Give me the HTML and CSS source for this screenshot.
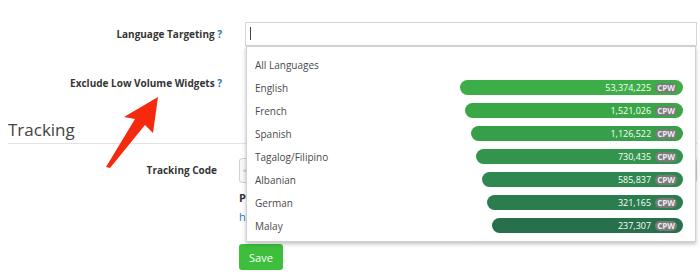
FILE: index.html
```html
<!DOCTYPE html>
<html lang="en">
<head>
    <meta charset="UTF-8">
    <meta name="viewport" content="width=device-width, initial-scale=1.0">
    <title>Widget Settings</title>
    <link rel="stylesheet" href="styles.css">
</head>
<body>
    <div class="page">
        <div class="form-row top-row">
            <label class="label">Language Targeting <span class="help">?</span></label>
            <div class="field">
                <div class="select-input"><span class="caret"></span></div>
                <ul class="dropdown">
                    <li class="option"><span>All Languages</span></li>
                    <li class="option"><span>English</span>
                        <span class="bar" style="width:223px;background:#3dae47">53,374,225 <b class="cpw">CPW</b></span></li>
                    <li class="option"><span>French</span>
                        <span class="bar" style="width:218px;background:#3aa747">1,521,026 <b class="cpw">CPW</b></span></li>
                    <li class="option"><span>Spanish</span>
                        <span class="bar" style="width:212px;background:#379f49">1,126,522 <b class="cpw">CPW</b></span></li>
                    <li class="option"><span>Tagalog/Filipino</span>
                        <span class="bar" style="width:207px;background:#33944e">730,435 <b class="cpw">CPW</b></span></li>
                    <li class="option"><span>Albanian</span>
                        <span class="bar" style="width:201px;background:#2f8850">585,837 <b class="cpw">CPW</b></span></li>
                    <li class="option"><span>German</span>
                        <span class="bar" style="width:196px;background:#2b7c4f">321,165 <b class="cpw">CPW</b></span></li>
                    <li class="option"><span>Malay</span>
                        <span class="bar" style="width:191px;background:#286f4c">237,307 <b class="cpw">CPW</b></span></li>
                </ul>
            </div>
        </div>

        <div class="form-row top-row exclude-row">
            <label class="label">Exclude Low Volume Widgets <span class="help">?</span></label>
            <div class="field"></div>
        </div>

        <h2 class="section-title">Tracking</h2>

        <div class="form-row tracking-row">
            <label class="label">Tracking Code</label>
            <div class="field">
                <div class="code-input">&lt;script&gt;</div>
                <p class="pixel-title">Pixel URL</p>
                <a class="pixel-link" href="#">https://track.example.com/pixel</a>
                <button class="save">Save</button>
            </div>
        </div>

        <svg class="arrow" width="700" height="280" viewBox="0 0 700 280">
            <polygon points="158,97 153,133 145,125 110,168 106,167 135,119 124,117" fill="#f5290e"/>
        </svg>
    </div>
</body>
</html>
```

FILE: styles.css
```css
* {
    margin: 0;
    padding: 0;
    box-sizing: border-box;
}

body {
    background: #fff;
    font-family: "Open Sans", Arial, sans-serif;
    color: #333;
}

.page {
    position: relative;
    width: 700px;
    height: 280px;
    padding: 22px 3px 0 8px;
    overflow: hidden;
}

.form-row {
    display: grid;
    align-items: center;
}

.top-row {
    grid-template-columns: 214px 1fr;
    column-gap: 23px;
    height: 24px;
}

.exclude-row {
    margin-top: 25px;
}

.label {
    text-align: right;
    font-size: 10px;
    font-weight: 700;
    color: #353535;
    white-space: nowrap;
}

.help {
    color: #2f75b5;
}

.field {
    position: relative;
}

.select-input {
    height: 24px;
    border: 1px solid #d6d6d6;
    padding: 4px 4px;
}

.caret {
    display: block;
    width: 1px;
    height: 13px;
    background: #444;
}

/* open language list, drawn over the rest of the form */
.dropdown {
    position: absolute;
    top: 24px;
    left: 1px;
    right: 1px;
    height: 196px;
    list-style: none;
    background: #fff;
    border: 1px solid #d0d0d0;
    box-shadow: 0 2px 4px rgba(0, 0, 0, 0.25);
    padding: 6px 12px 0 8px;
    z-index: 2;
}

.option {
    display: flex;
    justify-content: space-between;
    align-items: center;
    height: 23px;
    font-size: 10px;
    color: #4a4a4a;
}

.bar {
    display: flex;
    justify-content: flex-end;
    align-items: center;
    gap: 4px;
    height: 15px;
    border-radius: 8px;
    padding-right: 6px;
    color: #fff;
    font-size: 9px;
}

.cpw {
    background: #7a7a7a;
    color: #eee;
    font-size: 8px;
    font-weight: 700;
    line-height: 10px;
    padding: 0 2px;
    border-radius: 5px;
}

.section-title {
    margin-top: 24px;
    font-size: 17px;
    font-weight: 400;
    line-height: 22px;
    color: #444;
    padding-bottom: 2px;
    border-bottom: 1px solid #e3e3e3;
}

.tracking-row {
    grid-template-columns: 209px 1fr;
    column-gap: 22px;
    align-items: start;
    margin-top: 14px;
}

.tracking-row .label {
    line-height: 25px;
}

.code-input {
    height: 25px;
    border: 1px solid #d2d2d2;
    border-radius: 3px;
    background: #f7f7f7;
    font-size: 9px;
    line-height: 11px;
    color: #aaa;
    padding: 6px 3px;
    white-space: nowrap;
}

.pixel-title {
    margin-top: 7px;
    font-size: 11px;
    font-weight: 700;
    line-height: 16px;
    color: #333;
}

.pixel-link {
    display: block;
    margin-top: 3px;
    font-size: 11px;
    line-height: 16px;
    color: #2f75b5;
    text-decoration: none;
}

.save {
    margin-top: 19px;
    width: 44px;
    height: 26px;
    border: none;
    border-radius: 3px;
    background: #3dbe3d;
    color: #fff;
    font-family: "Open Sans", Arial, sans-serif;
    font-size: 11px;
}

.arrow {
    position: absolute;
    top: 0;
    left: 0;
    pointer-events: none;
    z-index: 3;
}
```
